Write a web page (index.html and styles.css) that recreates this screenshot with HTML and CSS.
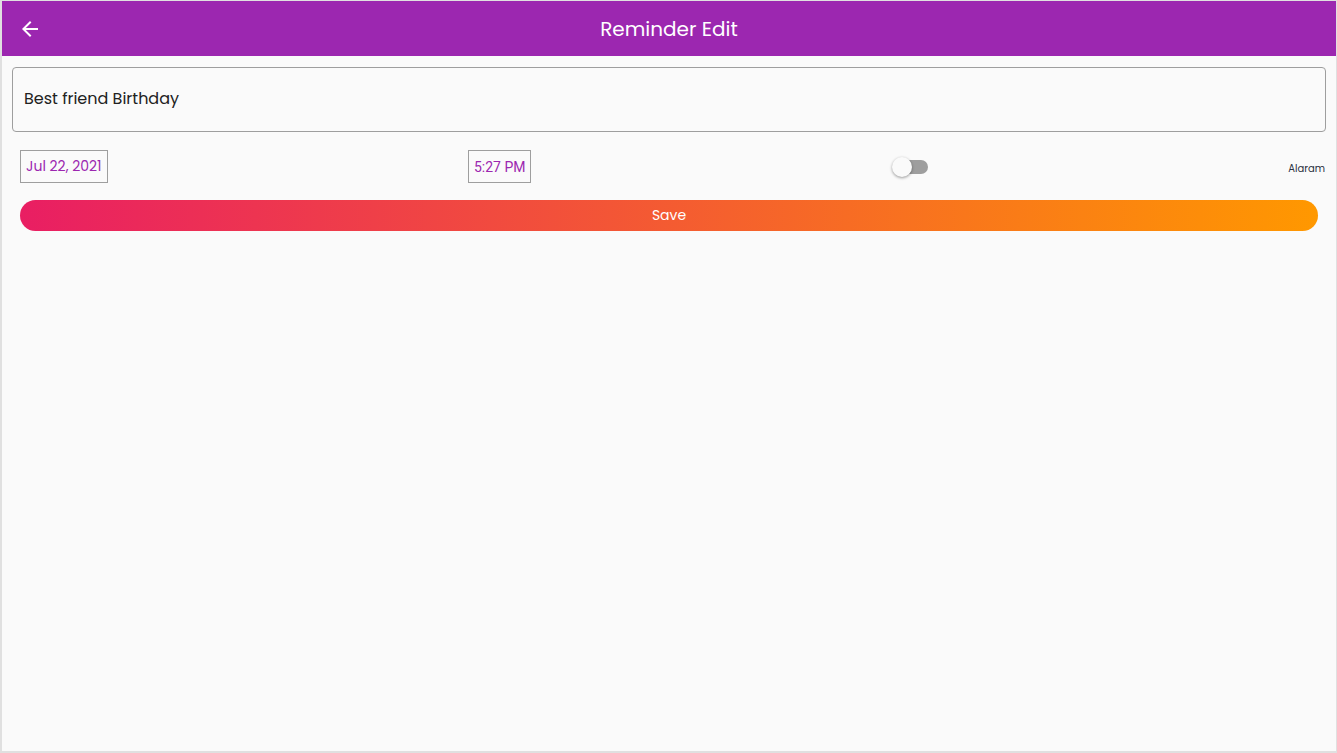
FILE: index.html
```html
<!DOCTYPE html>
<html>

<head>
    <title>Reminder Edit</title>
    <meta charset="utf-8">
    <meta name="viewport" content="width=device-width, initial-scale=1.0">
    <link rel="stylesheet" href="styles.css">
</head>

<body>
    <div class="ramme">
        <header class="topbar">
            <button class="tilbage" aria-label="Back">
                <svg width="24" height="24" viewBox="0 0 24 24">
                    <path d="M20 11H7.83l5.59-5.59L12 4l-8 8 8 8 1.41-1.41L7.83 13H20v-2z" fill="#ffffff" />
                </svg>
            </button>
            <h1>Reminder Edit</h1>
        </header>

        <main class="indhold">
            <div class="felt">Best friend Birthday</div>

            <div class="raekke">
                <div class="boks dato">Jul 22, 2021</div>
                <div class="boks tid">5:27 PM</div>
                <div class="kontakt">
                    <span class="spor"></span>
                    <span class="knap"></span>
                </div>
                <div class="alarm">Alaram</div>
            </div>

            <button class="gem">Save</button>
        </main>
    </div>
</body>

</html>
```

FILE: styles.css
```css
* {
    box-sizing: border-box;
}

html,
body {
    margin: 0;
    height: 100%;
    background-color: #e0e0e0;
}

body {
    font-family: "Poppins", "Lato", "Noto Sans", sans-serif;
}

.ramme {
    margin: 1px 1px 2px 2px;
    height: 750px;
    background-color: #fafafa;
}

.topbar {
    height: 55px;
    background-color: #9c27b0;
    display: flex;
    align-items: center;
    position: relative;
}

.tilbage {
    background: none;
    border: 0;
    padding: 0;
    margin-left: 16px;
    width: 24px;
    height: 24px;
    display: flex;
    align-items: center;
}

.topbar h1 {
    position: absolute;
    left: 0;
    right: 0;
    margin: 0;
    text-align: center;
    color: #ffffff;
    font-size: 20px;
    font-weight: 400;
    pointer-events: none;
}

.indhold {
    padding: 11px 10px 0 10px;
}

.felt {
    height: 65px;
    border: 1px solid #9e9e9e;
    border-radius: 4px;
    padding: 0 11px 2px 11px;
    display: flex;
    align-items: center;
    font-size: 16px;
    color: #212121;
}

.raekke {
    display: flex;
    justify-content: space-between;
    align-items: center;
    padding: 18px 1px 0 8px;
    height: 51px;
}

.boks {
    height: 33px;
    border: 1px solid #9e9e9e;
    padding: 0 5px;
    display: flex;
    align-items: center;
    color: #9c27b0;
    font-size: 14px;
}

.tid {
    font-family: "Roboto", sans-serif;
}

.kontakt {
    position: relative;
    width: 36px;
    height: 20px;
}

.spor {
    position: absolute;
    left: 2px;
    right: 0;
    top: 3px;
    height: 14px;
    border-radius: 7px;
    background-color: #9e9e9e;
}

.knap {
    position: absolute;
    left: 0;
    top: 0;
    width: 20px;
    height: 20px;
    border-radius: 50%;
    background-color: #fafafa;
    box-shadow: 0 1px 3px rgba(0, 0, 0, 0.4);
}

.alarm {
    font-size: 10px;
    color: #2b3140;
    padding-top: 4px;
}

.gem {
    display: block;
    margin: 17px 8px 0 8px;
    width: calc(100% - 16px);
    height: 31px;
    border: 0;
    border-radius: 16px;
    background: linear-gradient(to right, #e91e63, #ff9800);
    color: #ffffff;
    font-family: "Poppins", "Lato", "Noto Sans", sans-serif;
    font-size: 14px;
    padding: 0 0 1px 0;
}
```
